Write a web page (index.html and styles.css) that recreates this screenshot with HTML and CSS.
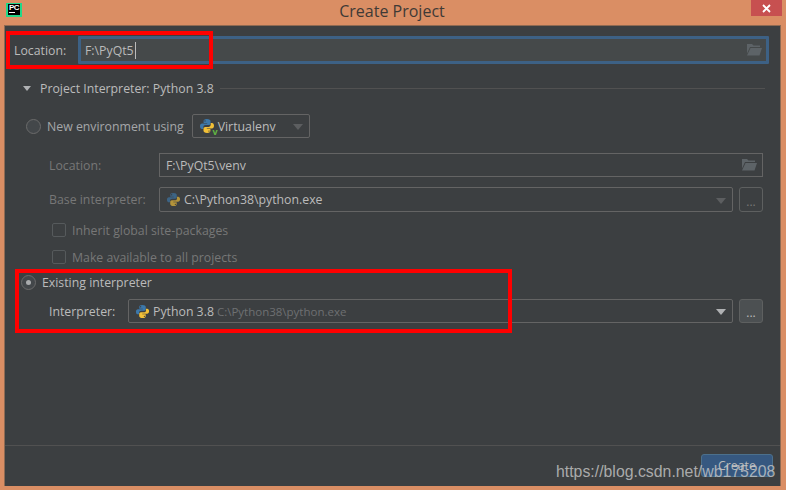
FILE: index.html
```html
<!DOCTYPE html>
<html lang="en">
<head>
  <meta charset="UTF-8" />
  <title>Create Project</title>
  <link rel="stylesheet" href="styles.css">
</head>
<body>
  <svg class="defs" width="0" height="0">
    <symbol id="py" viewBox="0 0 16 16">
      <path fill="#3c78aa" d="M7.9 1C5.2 1 4.6 2 4.6 3.2V5h3.6v.6H3.1C1.8 5.6 1 6.6 1 8.2s.8 2.8 2 2.8h1.3V9.200C4.300 8 5.300 7.100 6.500 7.100h3.300c1 0 1.700-.8 1.700-1.800V3.200C11.500 2 10.300 1 7.900 1zM6 2.200a.7.7 0 1 1 0 1.400.7.7 0 0 1 0-1.400z"/>
      <path fill="#f2c037" d="M8.100 15c2.700 0 3.300-1 3.300-2.200V11H7.800v-.6h5.100c1.300 0 2.100-1 2.100-2.600S14.200 5 13 5h-1.300v1.800c0 1.200-1 2.100-2.200 2.100H6.200c-1 0-1.700.8-1.700 1.800v2.100C4.500 14 5.700 15 8.100 15zM10 13.800a.7.7 0 1 1 0-1.400.7.7 0 0 1 0 1.400z"/>
    </symbol>
    <symbol id="folder" viewBox="0 0 15 12">
      <path fill="currentColor" d="M0 0h5l1.500 1.500H13V3H3L0 9.500z"/>
      <path fill="currentColor" d="M3.500 4H15l-2.500 7.500H0z"/>
    </symbol>
  </svg>

  <header class="titlebar">
    <div class="logo"><span>PC</span></div>
    <div class="title">Create Project</div>
    <div class="close">
      <svg width="9" height="9" viewBox="0 0 9 9"><path d="M1 1l7 7M8 1L1 8" stroke="#fff" stroke-width="1.800"/></svg>
    </div>
  </header>

  <main class="dialog">
    <div class="top-row">
      <label class="top-label">Location:</label>
      <div class="field focus">
        <span class="caret">F:\PyQt5</span>
        <svg class="folder"><use href="#folder"/></svg>
      </div>
    </div>

    <div class="section-head">
      <span class="tri"></span>
      <span>Project Interpreter: Python 3.8</span>
      <span class="line"></span>
    </div>

    <div class="env-row">
      <span class="radio"></span>
      <span class="env-label">New environment using</span>
      <div class="env-select">
        <span class="venv-icon">
          <svg class="py"><use href="#py"/></svg>
          <span class="venv-v">v</span>
        </span>
        <span>Virtualenv</span>
        <span class="arrow dim"></span>
      </div>
    </div>

    <div class="form-row loc">
      <label class="dim-text">Location:</label>
      <div class="field">
        <span>F:\PyQt5\venv</span>
        <svg class="folder"><use href="#folder"/></svg>
      </div>
    </div>

    <div class="form-row base">
      <label class="dim-text">Base interpreter:</label>
      <div class="field combo">
        <svg class="py faded"><use href="#py"/></svg>
        <span>C:\Python38\python.exe</span>
        <span class="arrow dim"></span>
      </div>
      <div class="dots off">...</div>
    </div>

    <div class="check first"><span class="box"></span><span class="dim-text">Inherit global site-packages</span></div>
    <div class="check"><span class="box"></span><span class="dim-text">Make available to all projects</span></div>

    <div class="existing">
      <span class="radio on"></span>
      <span>Existing interpreter</span>
    </div>

    <div class="form-row interp">
      <label>Interpreter:</label>
      <div class="field combo">
        <svg class="py"><use href="#py"/></svg>
        <span>Python 3.8</span>
        <span class="path">C:\Python38\python.exe</span>
        <span class="arrow"></span>
      </div>
      <div class="dots">...</div>
    </div>

    <footer class="footer">
      <button class="btn-create">Create</button>
    </footer>
  </main>

  <div class="mark mark-top"></div>
  <div class="mark mark-bottom"></div>
  <div class="watermark">https://blog.csdn.net/wb175208</div>
</body>
</html>
```

FILE: styles.css
```css
html, body {
  margin: 0;
  padding: 0;
}
body {
  position: relative;
  width: 786px;
  height: 490px;
  overflow: hidden;
  background: #da8e64;
  font-family: "Open Sans", "Noto Sans", sans-serif;
  font-size: 12.3px;
  color: #bbbbbb;
}
.defs {
  position: absolute;
}

/* title bar */
.titlebar {
  position: relative;
  height: 25px;
  display: flex;
  justify-content: center;
  align-items: center;
}
.title {
  font-size: 16px;
  color: #3f3a36;
  margin-top: -4px;
  margin-left: -2px;
}
.logo {
  position: absolute;
  left: 6px;
  top: 3px;
  width: 12px;
  height: 11px;
  background: #000;
  border: 1px solid #21d789;
  border-width: 1px 2px 2px 2px;
  color: #fff;
}
.logo span {
  display: block;
  font-family: "Liberation Sans", sans-serif;
  font-size: 8px;
  font-weight: bold;
  line-height: 8px;
  letter-spacing: -0.5px;
  padding-left: 1px;
}
.logo::after {
  content: '';
  display: block;
  width: 6px;
  height: 1px;
  margin: 0 0 0 1px;
  background: #fff;
}
.close {
  position: absolute;
  right: 4px;
  top: 0;
  width: 31px;
  height: 16px;
  background: #c75050;
  display: flex;
  justify-content: center;
  align-items: center;
}

/* dialog */
.dialog {
  margin-left: 4px;
  width: 777px;
  height: 461px;
  box-sizing: border-box;
  border-top: 1px solid #8f6a52;
  border-left: 1px solid #8f6a52;
  border-right: 1px solid #8f6a52;
  background: #3c3f41;
  padding-top: 10px;
  display: flex;
  flex-direction: column;
}
.top-row {
  display: flex;
  align-items: center;
  height: 28px;
  padding: 0 11px 0 9px;
}
.top-label {
  width: 64px;
  flex: none;
}
.field {
  flex: 1;
  height: 100%;
  box-sizing: border-box;
  border: 1px solid #646464;
  display: flex;
  align-items: center;
  padding: 0 6px;
  position: relative;
  color: #bbbbbb;
}
.field.focus {
  border: 3px solid #3d6185;
  background: #45494a;
  padding-left: 4px;
  border-radius: 1px;
}
.caret {
  border-right: 1px solid #bbbbbb;
  padding-right: 1px;
}
.folder {
  position: absolute;
  right: 5px;
  width: 15px;
  height: 12px;
  color: #5d6367;
}
.focus .folder {
  right: 4px;
}

.section-head {
  display: flex;
  align-items: center;
  gap: 6px;
  height: 16px;
  margin: 16px 15px 0 18px;
}
.tri {
  width: 0;
  height: 0;
  border-left: 4px solid transparent;
  border-right: 4px solid transparent;
  border-top: 5px solid #afb1b3;
  margin-right: 3px;
}
.line {
  flex: 1;
  height: 1px;
  background: #515151;
}

.env-row {
  display: flex;
  align-items: center;
  height: 24px;
  margin: 18px 0 0 21px;
}
.radio {
  width: 13px;
  height: 13px;
  border: 1px solid #6b6b6b;
  border-radius: 50%;
  background: #43474a;
  flex: none;
  display: flex;
  align-items: center;
  justify-content: center;
}
.radio.on::after {
  content: '';
  width: 5px;
  height: 5px;
  border-radius: 50%;
  background: #a9abad;
}
.env-label {
  margin-left: 6px;
  color: #a5a7a9;
}
.env-select {
  display: flex;
  align-items: center;
  width: 118px;
  height: 24px;
  margin-left: 8px;
  box-sizing: border-box;
  border: 1px solid #646464;
  border-radius: 2px;
  padding: 0 6px;
  position: relative;
}
.venv-icon {
  position: relative;
  width: 16px;
  height: 16px;
  margin-right: 3px;
}
.venv-v {
  position: absolute;
  right: -3px;
  bottom: -2px;
  font-size: 9px;
  line-height: 9px;
  font-weight: bold;
  color: #62b543;
}
.py {
  width: 15px;
  height: 15px;
  flex: none;
}
.venv-icon .py {
  width: 16px;
  height: 16px;
}
.py.faded {
  opacity: 0.65;
}

.arrow {
  position: absolute;
  right: 6px;
  top: 50%;
  margin-top: -2px;
  width: 0;
  height: 0;
  border-left: 5px solid transparent;
  border-right: 5px solid transparent;
  border-top: 6px solid #afb1b3;
}
.arrow.dim {
  border-top-color: #5c5e60;
}

.form-row {
  display: flex;
  align-items: center;
  padding: 0 17px 0 44px;
}
.form-row label {
  flex: none;
}
.loc {
  height: 24px;
  margin-top: 15px;
}
.loc label, .base label {
  width: 110px;
}
.base {
  height: 25px;
  margin-top: 10px;
}
.interp {
  height: 24px;
  margin-top: 10px;
}
.interp label {
  width: 79px;
}
.combo {
  border-radius: 2px;
  gap: 3px;
}
.dim-text {
  color: #777777;
}
.path {
  color: #6e7072;
  font-size: 11.5px;
}
.dots {
  flex: none;
  width: 24px;
  height: 100%;
  margin-left: 6px;
  box-sizing: border-box;
  border: 1px solid #5e6060;
  border-radius: 3px;
  background: #4c5052;
  display: flex;
  justify-content: center;
  align-items: flex-end;
  line-height: 18px;
  font-size: 12px;
  color: #bbbbbb;
}
.dots.off {
  background: none;
  color: #777777;
}

.check {
  display: flex;
  align-items: center;
  gap: 6px;
  height: 14px;
  margin: 13px 0 0 47px;
}
.check.first {
  margin-top: 11px;
}
.box {
  width: 12px;
  height: 12px;
  border: 1px solid #565a5c;
  border-radius: 2px;
  flex: none;
}
.existing {
  display: flex;
  align-items: center;
  gap: 6px;
  height: 14px;
  margin: 11px 0 0 16px;
}

.footer {
  margin-top: auto;
  height: 41px;
  box-sizing: border-box;
  border-top: 1px solid #515151;
  padding: 8px 7px 0 0;
  display: flex;
  justify-content: flex-end;
  align-items: flex-start;
}
.btn-create {
  width: 72px;
  height: 23px;
  border: 1px solid #4c708c;
  border-radius: 3px;
  background: #365880;
  color: #bbbbbb;
  font-family: inherit;
  font-size: 12.3px;
  padding: 0;
}

/* annotations drawn on top of the screenshot */
.mark {
  position: absolute;
  box-sizing: border-box;
  border: 4px solid #ff0000;
}
.mark-top {
  left: 6px;
  top: 31px;
  width: 207px;
  height: 38px;
}
.mark-bottom {
  left: 15px;
  top: 269px;
  width: 497px;
  height: 64px;
}
.watermark {
  position: absolute;
  left: 556px;
  top: 463px;
  font-family: "Liberation Sans", Arial, sans-serif;
  font-size: 15.85px;
  line-height: 18px;
  color: rgba(200, 200, 200, 0.8);
}
```
